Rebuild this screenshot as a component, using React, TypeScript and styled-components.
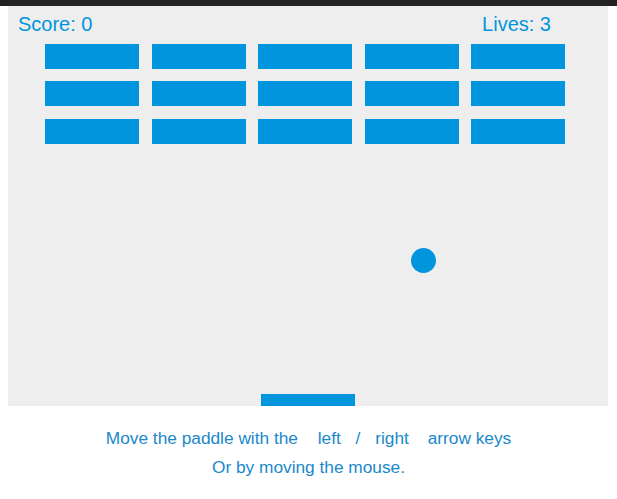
import React from "react";
import styled, { createGlobalStyle } from "styled-components";

const Global = createGlobalStyle`
  html, body { margin: 0; padding: 0; background: #ffffff; }
  body { font-family: "Liberation Sans", Arial, sans-serif; }
`;

const TopBar = styled.div`
  height: 6px;
  background: #222222;
`;

const Page = styled.main`
  padding: 0 8px;
  display: flex;
  flex-direction: column;
  align-items: flex-start;
`;

const Board = styled.div`
  position: relative;
  width: 600px;
  height: 400px;
  background: #eeeeee;
  overflow: hidden;
  display: flex;
  flex-direction: column;
`;

const Hud = styled.div`
  display: flex;
  justify-content: space-between;
  padding: 7px 57px 0 10px;
  font-size: 20px;
  line-height: 23px;
  color: #0095dd;
`;

const Bricks = styled.div`
  margin: 7.5px 0 0 37px;
  display: grid;
  grid-template-columns: repeat(5, 94px);
  grid-auto-rows: 25px;
  column-gap: 12.5px;
  row-gap: 12.5px;
`;

const Brick = styled.div`
  background: #0095dd;
`;

const Ball = styled.div<{ $x: number; $y: number; $r: number }>`
  position: absolute;
  left: ${(p) => p.$x - p.$r}px;
  top: ${(p) => p.$y - p.$r}px;
  width: ${(p) => p.$r * 2}px;
  height: ${(p) => p.$r * 2}px;
  border-radius: 50%;
  background: #0095dd;
`;

const Paddle = styled.div<{ $x: number }>`
  position: absolute;
  left: ${(p) => p.$x}px;
  bottom: 0;
  width: 94px;
  height: 12.5px;
  background: #0095dd;
`;

const Help = styled.div`
  align-self: stretch;
  margin-top: 18px;
  text-align: center;
  font-size: 17.3px;
  line-height: 29px;
  color: #1a88cc;
`;

const Line = styled.p`
  margin: 0;
`;

const KeyGroup = styled.span`
  padding: 0 4px 0 5px;
`;

const Key = styled.kbd`
  font-family: "Liberation Sans", Arial, sans-serif;
  font-size: 17.3px;
  padding: 0 10px;
`;

export default function App() {
  const rows = 3;
  const cols = 5;
  return (
    <>
      <Global />
      <TopBar />
      <Page>
        <Board>
          <Hud>
            <span>Score: 0</span>
            <span>Lives: 3</span>
          </Hud>
          <Bricks>
            {Array.from({ length: rows * cols }).map((_, i) => (
              <Brick key={i} />
            ))}
          </Bricks>
          <Ball $x={415} $y={254} $r={12.5} />
          <Paddle $x={252.5} />
        </Board>
        <Help>
          <Line>
            Move the paddle with the{" "}
            <KeyGroup>
              <Key>left</Key> / <Key>right</Key>
            </KeyGroup>{" "}
            arrow keys
          </Line>
          <Line>Or by moving the mouse.</Line>
        </Help>
      </Page>
    </>
  );
}
